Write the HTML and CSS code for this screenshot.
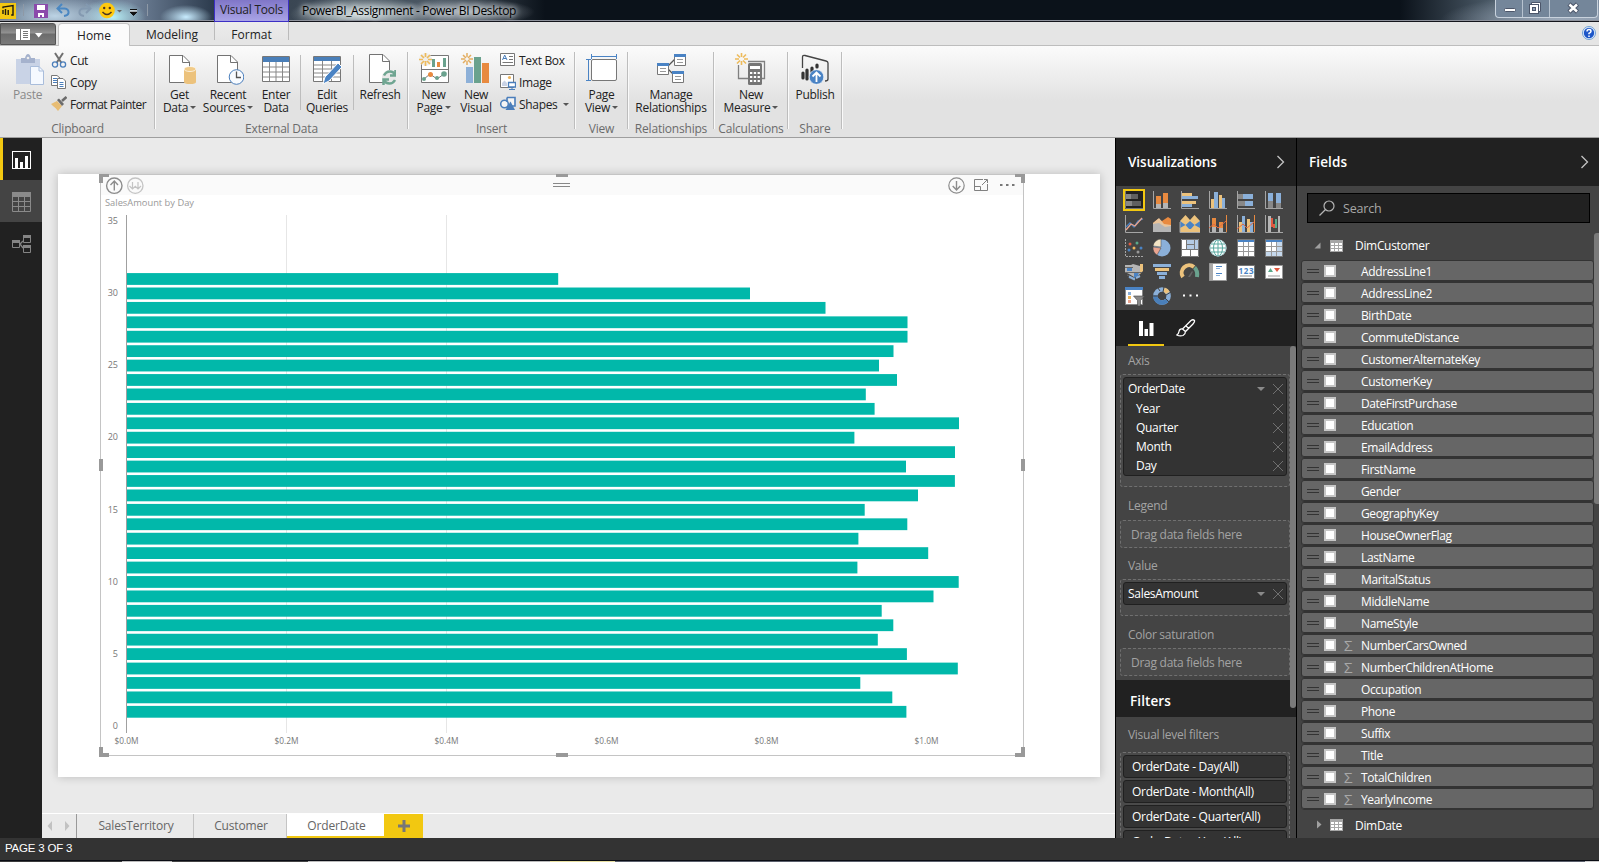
FILE: index.html
```html
<!DOCTYPE html>
<html lang="en">
<head>
<meta charset="utf-8">
<title>PowerBI_Assignment - Power BI Desktop</title>
<link rel="stylesheet" href="styles.css">
</head>
<body>
<div class="app">
  <header class="titlebar">
    <div class="quick">
      <svg width="152" height="21" viewBox="0 0 152 21">
        <rect x="0" y="3" width="16" height="16" fill="#f2c811"/>
        <path d="M3 14V10M5.5 15V9M8.2 15V10M3 8.2V7L13 5.5V15H11.2" fill="none" stroke="#1c1a10" stroke-width="1.4"/>
        <path d="M23.5 4V16M147.5 4V16" stroke="#8e99a6"/>
        <path d="M34 4H48V18H34Z" fill="#8b4bab"/><path d="M37 5H45V10H37Z" fill="#fff"/><path d="M38 13H44V17H42V15H40V17H38Z" fill="#fff"/>
        <path d="M62 4L57.500 8.500L62 13M58 8.500H64.500Q69 9 68.500 13Q68 15.500 64 16" fill="none" stroke="#4a87c2" stroke-width="2"/>
        <path d="M86 4L90.500 8.500L86 13M90 8.500H83.500Q79 9 79.500 13Q80 15.500 84 16" fill="none" stroke="#8399b0" stroke-width="2"/>
        <circle cx="107" cy="10.500" r="7.800" fill="#ffc90e"/><circle cx="104.200" cy="8" r="1.200" fill="#4a3420"/><circle cx="109.800" cy="8" r="1.200" fill="#4a3420"/><path d="M102.500 12Q107 17 111.500 12" fill="none" stroke="#4a3420" stroke-width="1.400"/>
        <path d="M117 10H122L119.500 12.500Z" fill="#666"/>
        <path d="M130 9.500H137M130 12H137L133.500 15.500Z" fill="#111" stroke="#111"/><path d="M130 11H137" stroke="#fff"/>
      </svg>
    </div>
    <div class="visual-tools">Visual Tools</div>
    <div class="window-title">PowerBI_Assignment - Power BI Desktop</div>
    <div class="window-buttons">
      <span class="wb"><svg width="28" height="17"><rect x="8.500" y="8.500" width="11" height="3" rx="1" fill="#fff" stroke="#4c566a"/></svg></span>
      <span class="wb"><svg width="26" height="17"><path d="M8.500 2.500H17.500V11.500H8.500Z" fill="#fff" stroke="#4c566a"/><rect x="6.500" y="4.500" width="9" height="9" fill="#fff" stroke="#4c566a"/><rect x="9.500" y="7.500" width="3" height="3" fill="#8fa0b5" stroke="#4c566a"/></svg></span>
      <span class="wb wide"><svg width="46" height="17"><path d="M19 4L27.500 12M27.500 4L19 12" stroke="#4c566a" stroke-width="4.500"/><path d="M19.500 4.500L27 11.500M27 4.500L19.500 11.500" stroke="#fff" stroke-width="2.500"/></svg></span>
    </div>
  </header>

  <nav class="tabs">
    <div class="file-tab"><svg width="56" height="22"><path d="M15 5H29V16H15Z" fill="#fff"/><path d="M19.500 5V16" stroke="#777"/><path d="M22 7.500H27M22 9.500H27M22 11.500H27M22 13.500H27" stroke="#777"/><path d="M34 9H41.500L37.700 13.500Z" fill="#fff"/></svg></div>
    <div class="tab home">Home</div>
    <div class="tab modeling">Modeling</div>
    <div class="tab format">Format</div>
    <svg class="help" width="14" height="14" viewBox="0 0 14 14"><circle cx="7" cy="7" r="6.500" fill="#e8f1fb" stroke="#6f9fd4"/><circle cx="7" cy="7" r="5.200" fill="#1d56c8"/><path d="M5 5.500Q5 3.500 7 3.500Q9 3.500 9 5.200Q9 6.200 7 7.300V8.300M7 9.500V11" fill="none" stroke="#fff" stroke-width="1.500"/></svg>
  </nav>

  <section class="ribbon">
    <div class="group g-clip">
      <div class="items">
        <div class="big w54 disabled">
          <svg width="32" height="34" viewBox="0 0 32 34"><rect x="4" y="6" width="24" height="25" fill="#c9d3e6"/><path d="M9 10V5H13Q14 1 16 1Q18 1 19 5H23V10Z" fill="#a5b2cd"/><circle cx="16" cy="5" r="1.300" fill="#eee"/><path d="M18.500 13.500H27L31.500 18V31.500H18.500Z" fill="#f5f9ff" stroke="#a9bddb"/><path d="M27 13.500V18H31.500" fill="none" stroke="#a9bddb"/></svg>
          <span>Paste</span>
        </div>
        <div class="smalls clip">
          <div class="small"><svg width="16" height="16" viewBox="0 0 16 16"><path d="M4 1L10.500 11M12 1L5.500 11" stroke="#707070" stroke-width="2"/><circle cx="4" cy="12.500" r="2.600" fill="none" stroke="#4a7ebb" stroke-width="1.300"/><circle cx="12" cy="12.500" r="2.600" fill="none" stroke="#4a7ebb" stroke-width="1.300"/></svg>Cut</div>
          <div class="small"><svg width="16" height="16" viewBox="0 0 16 16"><path d="M.5 1.500H6L9 4V11.500H.500Z" fill="#fff" stroke="#777"/><path d="M2 4.500H6M2 6.500H6M2 8.500H6" stroke="#4a7ebb"/><path d="M6.500 4.500H12L14.500 7V14.500H6.500Z" fill="#fff" stroke="#777"/><path d="M8.500 8.500H12.500M8.500 10.500H12.500M8.500 12.500H12.500" stroke="#4a7ebb"/></svg>Copy</div>
          <div class="small fp"><svg width="16" height="16" viewBox="0 0 16 16"><path d="M0 8L6 5L11 10L7 15Q5 12 2 10Z" fill="#e8bd74"/><path d="M6 4L8 2.500L13 8L11 10Z" fill="#6b6b6b"/><path d="M11 5L15.500 1" stroke="#6b6b6b" stroke-width="2.600"/></svg>Format Painter</div>
        </div>
      </div>
      <div class="glabel">Clipboard</div>
    </div>

    <div class="group g-ext">
      <div class="items">
        <div class="big w49"><svg width="32" height="34" viewBox="0 0 32 34"><path d="M5.500 2.500H19L25.500 9V29.500H5.500Z" fill="#fff" stroke="#737373"/><path d="M18.500 2.500V9.500H25.500" fill="none" stroke="#737373"/><path d="M20 16V29Q20 31 26 31Q32 31 32 29V16Z" fill="#ecc27c"/><ellipse cx="26" cy="16" rx="6" ry="2.500" fill="#f1cb89" stroke="#fff" stroke-width=".7"/></svg><span>Get<br>Data<i class="caret"></i></span></div>
        <div class="big w48"><svg width="32" height="34" viewBox="0 0 32 34"><path d="M5.500 2.500H19L25.500 9V29.500H5.500Z" fill="#fff" stroke="#737373"/><path d="M18.500 2.500V9.500H25.500" fill="none" stroke="#737373"/><circle cx="24.500" cy="24" r="7.300" fill="#f8fbff" stroke="#4a7ebb"/><path d="M24.500 18.500V24.500H29" fill="none" stroke="#555" stroke-width="1.300"/></svg><span>Recent<br>Sources<i class="caret"></i></span></div>
        <div class="big w47"><svg width="32" height="34" viewBox="0 0 32 34"><path d="M2.500 3.500H29.500V28.500H2.500Z" fill="#fff" stroke="#777"/><path d="M3 4H29V9H3Z" fill="#4a7fb9"/><path d="M3 14H29M3 19H29M3 24H29M9.500 9V28M16 9V28M22.500 9V28" stroke="#888"/></svg><span>Enter<br>Data</span></div>
        <i class="isep"></i>
        <div class="big w53"><svg width="32" height="34" viewBox="0 0 32 34"><path d="M2.500 3.500H29.500V28.500H2.500Z" fill="#fff" stroke="#777"/><path d="M3 4H29V8H3Z" fill="#4a7fb9"/><path d="M3 12H29M3 16H29M3 20H29M3 24H29M11.500 8V28M20.500 8V28" stroke="#888"/><path d="M12 31L14 24L27 10L31 14L18 28Z" fill="#4a83c4" stroke="#fff"/></svg><span>Edit<br>Queries</span></div>
        <i class="isep"></i>
        <div class="big w52"><svg width="32" height="34" viewBox="0 0 32 34"><path d="M5.500 1.500H19L25.500 8V29.500H5.500Z" fill="#fff" stroke="#737373"/><path d="M18.500 1.500V8.500H25.500" fill="none" stroke="#737373"/><circle cx="25.500" cy="24.500" r="7.500" fill="#e8e8e8"/><path d="M20 22.500Q22 18.500 26 18.500Q29 18.500 31 21.500M31.500 17V22.500H26M31 27Q29 30.500 25.500 30.500Q22 30.500 20 27.500M19.500 32V26.500H25" fill="none" stroke="#6fa591" stroke-width="2.500"/></svg><span>Refresh</span></div>
      </div>
      <div class="glabel">External Data</div>
    </div>

    <div class="group g-ins">
      <div class="items">
        <div class="big w50"><svg width="32" height="34" viewBox="0 0 32 34"><path d="M3.500 2.500H30.500V29.500H3.500Z" fill="#fff" stroke="#777"/><path d="M3 16.500H31" stroke="#777"/><path d="M14 6H17V14H14ZM25 5H28V14H25Z" fill="#6aa28e"/><path d="M19 9H22V14H19Z" fill="#e88a40"/><path d="M6 26L12 21L19 26L26 21" fill="none" stroke="#777"/><circle cx="6" cy="26" r="2" fill="#6aa28e"/><circle cx="12.500" cy="21.500" r="2.500" fill="#e88a40"/><circle cx="19" cy="25" r="2" fill="#6aa28e"/><circle cx="26" cy="21" r="2.800" fill="#6aa28e"/><circle cx="7.500" cy="6.500" r="6.500" fill="#eee"/><path d="M7.500 0V4M7.500 8V13M1 6.500H5M10 6.500H14M3 2L6 5M9 8L12 11M12 2L9 5M6 8L3 11" stroke="#edbb5c" stroke-width="1.700"/></svg><span>New<br>Page<i class="caret"></i></span></div>
        <div class="big w35"><svg width="32" height="34" viewBox="0 0 32 34"><rect x="6" y="14" width="7" height="16" fill="#8db0d8"/><rect x="14" y="4" width="7" height="26" fill="#6aa28e"/><rect x="22" y="10" width="7" height="20" fill="#e88a40"/><path d="M7 0V4M7 8V12M1 6H5M9 6H13M3 2L6 5M8 7L11 10M11 2L8 5M6 7L3 10" stroke="#e3ae62" stroke-width="1.500"/></svg><span>New<br>Visual</span></div>
        <div class="smalls ins">
          <div class="small"><svg width="16" height="16" viewBox="0 0 16 16"><path d="M.5 1.500H14.500V13.500H.500Z" fill="#fff" stroke="#777"/><path d="M2.500 8L4.700 3L7 8M3.200 6.500H6.300" fill="none" stroke="#4a7ebb"/><path d="M9 4.500H13M9 7.500H13M2.500 10.500H13" stroke="#777"/></svg>Text Box</div>
          <div class="small"><svg width="16" height="16" viewBox="0 0 16 16"><path d="M.5 .5H13.500V13.500H.500Z" fill="#fff" stroke="#777"/><circle cx="9.500" cy="3.500" r="1.600" fill="#edb55c"/><path d="M2 12V9L4.500 6.500L7 9V12Z" fill="#c9d3e6"/><path d="M8.500 8.500H15.500V13H8.500Z" fill="#fff" stroke="#4a7ebb" stroke-width="1.300"/><path d="M9 15.500H15M12 13V15" stroke="#4a7ebb"/></svg>Image</div>
          <div class="small"><svg width="16" height="16" viewBox="0 0 16 16"><circle cx="4.500" cy="8" r="3.800" fill="#f4f4f4" stroke="#4a7ebb" stroke-width="1.500"/><path d="M7 1.500H15V10H12" fill="#f4f4f4" stroke="#4a7ebb" stroke-width="1.600"/><path d="M7 1.500V6" stroke="#4a7ebb" stroke-width="1.600"/><path d="M5.500 14H15L10.500 5.500Z" fill="#4a7ebb"/></svg>Shapes<i class="caret"></i></div>
        </div>
      </div>
      <div class="glabel">Insert</div>
    </div>

    <div class="group g-view">
      <div class="items"><div class="big"><svg width="32" height="34" viewBox="0 0 32 34"><path d="M5.500 3.500H30M5.500 1V6M30.500 1V6M2.500 7V28M0 6.500H5M0 27.500H5" stroke="#4a83c4"/><rect x="5.500" y="6.500" width="25" height="21" rx="1.500" fill="#fff" stroke="#777"/></svg><span>Page<br>View<i class="caret"></i></span></div></div>
      <div class="glabel">View</div>
    </div>
    <div class="group g-rel">
      <div class="items"><div class="big"><svg width="32" height="34" viewBox="0 0 32 34"><path d="M13 13L21 5M13 16L20 23" stroke="#555" stroke-width="1.300"/><path d="M2.500 11.500H13.500V21.500H2.500ZM19.500 2.500H30.500V12.500H19.500ZM17.500 19.500H28.500V29.500H17.500Z" fill="#fff" stroke="#777"/><path d="M2 10H14V13H2ZM19 1H31V4H19ZM17 18H29V21H17Z" fill="#4a83c4"/><path d="M5 15.500H11M5 18.500H11M22 6.500H28M22 9.500H28M20 23.500H26M20 26.500H26" stroke="#999"/></svg><span>Manage<br>Relationships</span></div></div>
      <div class="glabel">Relationships</div>
    </div>
    <div class="group g-calc">
      <div class="items"><div class="big"><svg width="32" height="34" viewBox="0 0 32 34"><path d="M3.500 12V25.500H13M13 8.500H29.500V25.500H27" fill="none" stroke="#808080" stroke-width="1.300"/><rect x="13" y="10" width="14" height="22" rx="1.500" fill="#757575"/><path d="M15 13H25V16H15Z" fill="#fff"/><path d="M15 20H25M15 24H25M15 28H25" stroke="#fff" stroke-width="2.200" stroke-dasharray="2.300 1.500"/><path d="M6.500 0V4M6.500 8V12M0 6H4M9 6H13M2 1.500L5 4.500M8 7.500L11 10.500M11 1.500L8 4.500M5 7.500L2 10.500" stroke="#edbb5c" stroke-width="1.600"/></svg><span>New<br>Measure<i class="caret"></i></span></div></div>
      <div class="glabel">Calculations</div>
    </div>
    <div class="group g-share">
      <div class="items"><div class="big"><svg width="32" height="34" viewBox="0 0 32 34"><path d="M3.500 15V4Q3.500 2 6 2.500L27 8Q29 8.500 29 10V26Q29 28 26 28" fill="none" stroke="#444" stroke-width="1.300"/><path d="M4 20V25M8 17V26M13 15V19M18 12V14" stroke="#333" stroke-width="3.200" stroke-linecap="round"/><circle cx="17.500" cy="24" r="7.300" fill="#4a83c4" stroke="#fff" stroke-width=".6"/><path d="M17.500 29V20M13.500 23.500L17.500 19.500L21.500 23.500" fill="none" stroke="#fff" stroke-width="1.800"/></svg><span>Publish</span></div></div>
      <div class="glabel">Share</div>
    </div>
  </section>

  <main class="workspace">
    <aside class="rail">
      <div class="rail-item active"><svg width="20" height="19" viewBox="0 0 20 19"><rect x=".5" y=".5" width="18" height="17" fill="none" stroke="#fff"/><path d="M3 7H6V17H3ZM8 11H11V17H8ZM13 5H16V17H13Z" fill="#fff"/></svg></div>
      <div class="rail-item hover"><svg width="20" height="20" viewBox="0 0 20 20"><path d="M0 0H19V5H0Z" fill="#8a8a8a"/><path d="M.5 4V19.500H18.500V4M0 9.500H19M0 14.500H19M6.500 5V19M12.500 5V19" fill="none" stroke="#8a8a8a"/></svg></div>
      <div class="rail-item third"><svg width="20" height="19" viewBox="0 0 20 19"><path d="M.5 5.500H7.500V12.500H.500ZM11.500 .5H18.500V7.500H11.500ZM11.500 10.500H18.500V17.500H11.500Z" fill="none" stroke="#858585"/><path d="M8 9L11 6M8 9L11 13" stroke="#858585" stroke-width="1.300"/><path d="M0 5H8V8H0ZM11 0H19V3H11ZM11 10H19V13H11Z" fill="#858585"/></svg></div>
    </aside>

    <section class="canvas">
      <div class="page">
        <div class="visual">
          <svg id="chart" width="930" height="588" viewBox="98 172 930 588">
            <rect x="101" y="175" width="922" height="20" fill="#fafafa"/>
            <path d="M100.500 174.500H1023.500V755.500H100.500Z" fill="none" stroke="#c4c4c4"/>
            <path d="M99 174H109V177H103V183H99ZM1015 174H1025V183H1021V177H1015ZM99 747H103V753H109V757H99ZM1021 747H1025V757H1015V753H1021ZM556 174H568V177H556ZM556 753H568V757H556ZM99 459H103V471H99ZM1021 459H1025V471H1021Z" fill="#999"/>
            <path d="M553 183.500H570M553 186.500H570" stroke="#888"/>
            <circle cx="114.300" cy="185.700" r="7.700" fill="none" stroke="#8c8c8c" stroke-width="1.400"/><path d="M114.300 190.500V181.500M110.500 185L114.300 181L118 185" fill="none" stroke="#8c8c8c" stroke-width="1.400"/>
            <circle cx="135.300" cy="185.700" r="7.700" fill="none" stroke="#c4c4c4" stroke-width="1.300"/><path d="M132.500 182V189M138 182V189M129.500 186L132.500 189L135.300 186.300L138 189L141 186" fill="none" stroke="#c4c4c4" stroke-width="1.200"/>
            <circle cx="956.500" cy="185.500" r="7.700" fill="none" stroke="#8c8c8c" stroke-width="1.200"/><path d="M956.500 181V190M952.700 186L956.500 190L960.300 186" fill="none" stroke="#8c8c8c" stroke-width="1.400"/>
            <path d="M983 179.500H974.500V190.500H987.500V184M974.500 186.500H980.500V190.500M982 185L987 180M984 179.500H987.500V183" fill="none" stroke="#808080"/>
            <path d="M1000 184H1002.500V186H1000ZM1006 184H1008.500V186H1006ZM1012 184H1014.500V186H1012Z" fill="#777"/>
            <path d="M286.500 215V733M446.500 215V733" stroke="#e6e6e6"/>
            <text x="105" y="206" class="ctitle" textLength="89" lengthAdjust="spacingAndGlyphs">SalesAmount by Day</text>
            <g id="bars" fill="#01b8aa"></g>
            <path d="M126.500 215V733" stroke="#a0a0a0"/>
            <g id="axes" class="ctick"></g>
          </svg>
        </div>
      </div>
      <div class="sheet-tabs">
        <div class="pager"><svg width="33" height="24"><path d="M10 7V17L5.500 12ZM23 7V17L27.500 12Z" fill="#c2c2c2"/></svg></div>
        <div class="sheet s1">SalesTerritory</div>
        <div class="sheet s2">Customer</div>
        <div class="sheet s3">OrderDate</div>
        <div class="add"><svg width="12" height="12"><path d="M6 0V12M0 6H12" stroke="#777" stroke-width="3"/></svg></div>
      </div>
    </section>

    <aside class="viz-pane">
      <div class="pane-head">Visualizations<svg width="9" height="14"><path d="M1.500 1L7.500 7L1.500 13" fill="none" stroke="#c4c4c4" stroke-width="1.300"/></svg></div>
      <div class="gallery">
        <div class="vi sel"><svg viewBox="0 0 18 18"><path d="M.5 0V17.500H18" stroke="#777" fill="none"/><path d="M1 3H6V8H1ZM1 10H7V15H1Z" fill="#888"/><path d="M6 3H13V8H6ZM7 10H16V15H7Z" fill="#606060"/></svg></div>
        <div class="vi"><svg viewBox="0 0 18 18"><path d="M.5 0V17.500H18" stroke="#a5a5a5" fill="none"/><path d="M3 5H8V13H3ZM10 2H15V12H10Z" fill="#e88a40"/><path d="M3 13H8V17H3ZM10 12H15V17H10Z" fill="#b5b5b5"/></svg></div>
        <div class="vi"><svg viewBox="0 0 18 18"><path d="M.5 0V17.500H18" stroke="#a5a5a5" fill="none"/><path d="M1 2H11V5H1ZM1 10H15V13H1Z" fill="#ecc27c"/><path d="M1 5H17V8H1ZM1 13H11V16H1Z" fill="#8bb0d9"/></svg></div>
        <div class="vi"><svg viewBox="0 0 18 18"><path d="M.5 0V17.500H18" stroke="#a5a5a5" fill="none"/><path d="M2 8H5V17H2ZM10 4H13V17H10Z" fill="#ecc27c"/><path d="M5 1H9V17H5ZM13 7H16V17H13Z" fill="#8bb0d9"/></svg></div>
        <div class="vi"><svg viewBox="0 0 18 18"><path d="M.5 0V17.500H18" stroke="#a5a5a5" fill="none"/><path d="M1 3H6V8H1ZM1 10H8V15H1Z" fill="#888"/><path d="M6 3H16V8H6ZM8 10H16V15H8Z" fill="#8bb0d9"/></svg></div>
        <div class="vi"><svg viewBox="0 0 18 18"><path d="M.5 0V17.500H18" stroke="#a5a5a5" fill="none"/><path d="M3 2H8V10H3ZM11 2H16V12H11Z" fill="#8bb0d9"/><path d="M3 10H8V17H3ZM11 12H16V17H11Z" fill="#888"/></svg></div>

        <div class="vi"><svg viewBox="0 0 18 18"><path d="M.5 0V17.500H18" stroke="#a5a5a5" fill="none"/><path d="M1 12L5 8L9 12L13 6L18 4" stroke="#4a83c4" fill="none" stroke-width="1.300"/><path d="M1 15L6 9L10 11L17 3" stroke="#e9a48f" fill="none" stroke-width="1.300"/></svg></div>
        <div class="vi"><svg viewBox="0 0 18 18"><path d="M0 8L5 4L9 6L15 2L18 4V16H0Z" fill="#e88a40"/><path d="M0 8L6 3L11 9L18 10V17H0Z" fill="#e9c49b"/><path d="M0 9L6 8L12 12L18 11V17H0Z" fill="#b5b5b5"/></svg></div>
        <div class="vi"><svg viewBox="0 0 18 18"><path d="M-1 6L4.500 0L9 5L13.500 0L19 6V18H-1Z" fill="#ecc27c"/><path d="M-1 6L4.500 10L9 6L13.500 10L19 6V14H-1Z" fill="#4a83c4"/><path d="M-1 13L4.500 10L9 15L13.500 10L19 13V18H-1Z" fill="#ecc27c"/><path d="M-1 7V17.500H19" fill="none" stroke="#a5a5a5"/></svg></div>
        <div class="vi"><svg viewBox="0 0 18 18"><path d="M.5 0V17.500H17.500" stroke="#a5a5a5" fill="none"/><path d="M17.500 0V17" stroke="#e88a40"/><path d="M3 3H7V12H3ZM10 7H14V13H10Z" fill="#e88a40"/><path d="M3 12H7V17H3ZM10 13H14V17H10Z" fill="#b5b5b5"/><path d="M0 13L5 9L9 13L17 6" stroke="#e16a45" fill="none"/></svg></div>
        <div class="vi"><svg viewBox="0 0 18 18"><path d="M.5 0V17.500H17.500" stroke="#a5a5a5" fill="none"/><path d="M17.500 0V17" stroke="#e88a40"/><path d="M2 7H5V17H2ZM10 4H13V17H10Z" fill="#ecc27c"/><path d="M5 1H8V17H5ZM13 7H16V17H13Z" fill="#8bb0d9"/><path d="M0 14L6 9L10 13L17 7" stroke="#e16a45" fill="none"/></svg></div>
        <div class="vi"><svg viewBox="0 0 18 18"><path d="M.5 0V17.500H18" stroke="#a5a5a5" fill="none"/><path d="M3 1H6V17H3ZM13 1H15V17H13Z" fill="#b5b5b5"/><path d="M6 3H8V12H6ZM8 9H10V13H8Z" fill="#e1593f"/><path d="M10 4H12V13H10Z" fill="#5aa98a"/></svg></div>

        <div class="vi"><svg viewBox="0 0 18 18"><path d="M.5 0V17.500H18" stroke="#a5a5a5" fill="none" stroke-dasharray="2 1"/><circle cx="12" cy="4" r="1.500" fill="#5aa98a"/><circle cx="5" cy="5" r="1.500" fill="#e1593f"/><circle cx="9" cy="9" r="1.500" fill="#edb55c"/><circle cx="4" cy="11" r="1.500" fill="#4a83c4"/><circle cx="16" cy="9" r="1.500" fill="#4a83c4"/><circle cx="13" cy="13" r="1.500" fill="#999"/></svg></div>
        <div class="vi"><svg viewBox="0 0 18 18"><circle cx="9" cy="9" r="8.500" fill="#8bb0d9"/><path d="M8 8V0A8.500 8.500 0 0 0 0 7Z" fill="#f3e4c5" stroke="#444" stroke-width=".5"/><path d="M8 9L0 8A9 9 0 0 0 4 16Z" fill="#e9a48f" stroke="#444" stroke-width=".5"/></svg></div>
        <div class="vi"><svg viewBox="0 0 18 18"><path d="M0 0H18V18H0Z" fill="#fff"/><path d="M5 0H18V10H5Z" fill="#b4cbe5"/><path d="M.5 .5H17.500V17.500H.500ZM5.500 0V10M0 10.500H18M13.500 0V10M5 5.500H14M9.500 11V18" fill="none" stroke="#777"/></svg></div>
        <div class="vi"><svg viewBox="0 0 18 18"><circle cx="9" cy="9" r="8.500" fill="#fff"/><path d="M9 1V17M1 9H17M2 5H16M2 13H16" stroke="#5aa9a0"/><ellipse cx="9" cy="9" rx="4.500" ry="8" fill="none" stroke="#5aa9a0"/><circle cx="9" cy="9" r="8" fill="none" stroke="#8bc0c4" stroke-width=".7"/></svg></div>
        <div class="vi"><svg viewBox="0 0 18 18"><path d="M.5 .5H17.500V17.500H.500Z" fill="#fff" stroke="#777"/><path d="M1 1H17V3H1Z" fill="#4a83c4"/><path d="M1 7.500H17M1 12.500H17M6.500 3V17M11.500 3V17" stroke="#999"/></svg></div>
        <div class="vi"><svg viewBox="0 0 18 18"><path d="M.5 .5H17.500V17.500H.500Z" fill="#fff" stroke="#777"/><path d="M1 13H17V17H1ZM12 3H17V17H12Z" fill="#c5d8ec"/><path d="M1 1H17V3H1Z" fill="#4a83c4"/><path d="M1 7.500H17M1 12.500H17M6.500 3V17M11.500 3V17" stroke="#999"/></svg></div>

        <div class="vi"><svg viewBox="0 0 18 18"><path d="M0 2H6L8 1L15 3L17 8L14 12L9 14L4 11L0 9Z" fill="#b5b5b5"/><path d="M15 1H18V8L15 11Z" fill="#ecc27c"/><path d="M2 5H7V8H2ZM9 10L14 9L13 13L9 15Z" fill="#4a83c4"/><path d="M4 15L9 17M2 12L6 14M0 9.500H17M0 4.500H8" stroke="#666"/><path d="M4 13.500L10 16.500M11 15L15 13" stroke="#8bb0d9" stroke-width="2"/></svg></div>
        <div class="vi"><svg viewBox="0 0 18 18"><path d="M0 1H18V4H0ZM4 9H14V12H4Z" fill="#8bb0d9"/><path d="M2 5H16V8H2Z" fill="#ecc27c"/><path d="M6 13H12V16H6Z" fill="#8bb0d9"/></svg></div>
        <div class="vi"><svg viewBox="0 0 18 18"><path d="M2 14A7.500 7.500 0 0 1 13 4" fill="none" stroke="#ecc27c" stroke-width="4"/><path d="M13.500 4.500Q17 8 16 14" fill="none" stroke="#6aa28e" stroke-width="4"/><path d="M7 14L11 8L12 9L9 14Z" fill="#666"/></svg></div>
        <div class="vi"><svg viewBox="0 0 18 18"><path d="M.5 .5H17.500V17.500H.500Z" fill="#fff" stroke="#999"/><path d="M1 1H4V17H1Z" fill="#aaa"/><path d="M7 3.500H13M7 10.500H13" stroke="#4a83c4" stroke-width="1.200"/><path d="M7 5.500H11M7 12.500H11" stroke="#8bb0d9"/></svg></div>
        <div class="vi"><svg viewBox="0 0 18 18"><path d="M.5 2.500H17.500V15.500H.500Z" fill="#fff" stroke="#777"/><text x="1.500" y="10.500" font-size="8" font-weight="700" fill="#4a83c4" textLength="15">123</text><path d="M3 13H15" stroke="#888"/></svg></div>
        <div class="vi"><svg viewBox="0 0 18 18"><path d="M.5 2.500H17.500V15.500H.500Z" fill="#fff" stroke="#999"/><path d="M3 9L5.500 5L8 9Z" fill="#5aa98a"/><path d="M9 5H15L12 9Z" fill="#e1593f"/><path d="M3 13H15" stroke="#999"/></svg></div>

        <div class="vi"><svg viewBox="0 0 18 18"><path d="M.5 .5H17.500V17.500H.500Z" fill="#fff" stroke="#888"/><path d="M0 0H18V3H0Z" fill="#4a83c4"/><path d="M3 5H6V8H3Z" fill="#8bb0d9"/><path d="M3 9H6V12H3Z" fill="#edb55c"/><path d="M3 13H6V16H3Z" fill="#e9a48f"/><path d="M8.500 9H19.500L15.500 13.500V19H12.500V13.500Z" fill="#888" stroke="#444" stroke-width=".6"/></svg></div>
        <div class="vi"><svg viewBox="0 0 18 18"><g fill="none" stroke-width="4.500"><circle cx="9" cy="9" r="6.600" stroke="#8bb0d9"/><circle cx="9" cy="9" r="6.600" stroke="#ecc27c" pathLength="100" stroke-dasharray="12 88" transform="rotate(-72 9 9)"/><circle cx="9" cy="9" r="6.600" stroke="#4a7fb9" pathLength="100" stroke-dasharray="42 58" transform="rotate(35 9 9)"/></g><path d="M11 0L10 5M18 5L13 8M0 9H5M5 1L7 4M16 15L12 11" stroke="#444"/></svg></div>
        <div class="vi"><svg viewBox="0 0 18 18"><path d="M2 7.500H4V9.500H2ZM8.500 7.500H10.500V9.500H8.500ZM15 7.500H17V9.500H15Z" fill="#fff"/></svg></div>
      </div>
      <div class="pane-tabs">
        <div class="ptab on"><svg width="15" height="16"><path d="M0 0H4V15H0ZM5.500 8H9V15H5.500ZM10.500 2H14.500V15H10.500Z" fill="#fff"/></svg></div>
        <div class="ptab"><svg width="20" height="18" viewBox="0 0 20 18"><path d="M6.500 10L15 1.500Q17 0 18.500 1.500Q19 3 17 5L9.500 12.500ZM6.500 10Q3.500 9.500 3 12.500Q2.700 15 .8 16Q4 17.500 7 16.500Q9.500 15 9.500 12.500M10 7L13 9.500" fill="none" stroke="#fff" stroke-width="1.300"/></svg></div>
      </div>
      <div class="wells">
        <div class="wlabel l1">Axis</div>
        <div class="well w1"><div class="chip tall">
          <div class="cr first"><span>OrderDate</span><i class="dd"></i><b class="x"></b></div>
          <div class="cr"><span>Year</span><b class="x"></b></div>
          <div class="cr"><span>Quarter</span><b class="x"></b></div>
          <div class="cr"><span>Month</span><b class="x"></b></div>
          <div class="cr"><span>Day</span><b class="x"></b></div>
        </div></div>
        <div class="wlabel l2">Legend</div>
        <div class="well drop">Drag data fields here</div>
        <div class="wlabel l3">Value</div>
        <div class="well w3"><div class="chip"><div class="cr only"><span>SalesAmount</span><i class="dd"></i><b class="x"></b></div></div></div>
        <div class="wlabel l4">Color saturation</div>
        <div class="well drop">Drag data fields here</div>
        <div class="filters-head">Filters</div>
        <div class="wlabel l5">Visual level filters</div>
        <div class="well w5">
          <div class="chip f">OrderDate - Day(All)</div>
          <div class="chip f">OrderDate - Month(All)</div>
          <div class="chip f">OrderDate - Quarter(All)</div>
          <div class="chip f">OrderDate - Year(All)</div>
        </div>
        <div class="scroll"></div>
      </div>
    </aside>

    <aside class="fields-pane">
      <div class="pane-head">Fields<svg width="9" height="14"><path d="M1.500 1L7.500 7L1.500 13" fill="none" stroke="#c4c4c4" stroke-width="1.300"/></svg></div>
      <div class="search"><svg width="17" height="17"><circle cx="10" cy="6" r="5" fill="none" stroke="#b5b5b5" stroke-width="1.200"/><path d="M6.500 9.500L.5 15.500" stroke="#b5b5b5" stroke-width="1.300"/></svg>Search</div>
      <div class="table-row"><svg width="34" height="14"><path d="M11.500 3.500V9.500H5.500Z" fill="#a0a0a0"/><path d="M21 1H34V13H21Z" fill="#a6a6a6"/><path d="M22 4H25V6H22ZM26 4H29V6H26ZM30 4H33V6H30ZM22 7H25V9H22ZM26 7H29V9H26ZM30 7H33V9H30ZM22 10H25V12H22ZM26 10H29V12H26ZM30 10H33V12H30Z" fill="#fff"/></svg><span>DimCustomer</span></div>
      <div id="fields" class="fields"></div>
      <div class="table-row last"><svg width="34" height="14"><path d="M8 2.500V10.500L12.500 6.500Z" fill="#a0a0a0"/><path d="M21 1H34V13H21Z" fill="#a6a6a6"/><path d="M22 4H25V6H22ZM26 4H29V6H26ZM30 4H33V6H30ZM22 7H25V9H22ZM26 7H29V9H26ZM30 7H33V9H30ZM22 10H25V12H22ZM26 10H29V12H26ZM30 10H33V12H30Z" fill="#fff"/></svg><span>DimDate</span></div>
      <div class="fscroll"></div>
    </aside>
  </main>
  <footer class="status">PAGE 3 OF 3</footer>
  <div class="taskbar"></div>
</div>
<script src="app.js"></script>
</body>
</html>
```
FILE: styles.css
```css
* { box-sizing: border-box; }
body { margin: 0; font: 12px/13px "Open Sans", "Noto Sans", sans-serif; color: #222; overflow: hidden; }
svg { display: block; flex: none; }
.app { width: 1599px; height: 862px; display: flex; flex-direction: column; background: #eaeaea; overflow: hidden; }

/* Title bar */
.titlebar { height: 22px; flex: none; display: flex; border-bottom: 1px solid #14151c; box-shadow: inset 0 -1px #8e929c;
  background:
    radial-gradient(ellipse 26px 12px at 186px 17px, #c8ecff, transparent),
    radial-gradient(ellipse 60px 20px at 55px 16px, #bcd3e4, transparent),
    radial-gradient(ellipse 34px 18px at 112px 17px, #b9f1f8, transparent),
    radial-gradient(ellipse 70px 18px at 360px 14px, #d6e2e2, transparent),
    radial-gradient(ellipse 70px 14px at 465px 12px, #a6adb5, transparent),
    radial-gradient(ellipse 120px 26px at 1560px 21px, #9eabbb, transparent),
    linear-gradient(90deg, #66788c 0, #71839a 130px, #2b3a4c 215px, #3a4653 290px, #4b5864 440px, #0b121a 545px, #0b121a 1400px, #51616f 1500px, #74859a 1599px); }
.quick { width: 214px; }
.visual-tools { width: 75px; height: 22px; border: 1px solid #3c2fc4; border-top: 0; background: linear-gradient(#8076c8, #a9a4e6); text-align: center; line-height: 19px; color: #222; letter-spacing: -.25px; white-space: nowrap; }
.window-title { width: 240px; padding-left: 13px; line-height: 22px; color: #000; white-space: nowrap; letter-spacing: -.33px; text-shadow: 0 0 5px #dde3e6, 0 0 7px #dde3e6; }
.window-buttons { margin-left: auto; margin-right: 1px; height: 18px; display: flex; border: 1px solid #c8d2dd; border-top: 0; border-radius: 0 0 4px 4px; background: #74869a; }
.wb { width: 27px; border-right: 1px solid #b7c3d0; overflow: hidden; }
.wb.wide { width: 47px; border: 0; }

/* Ribbon tabs */
.tabs { height: 24px; flex: none; display: flex; align-items: flex-end; background: #e5e5e5; border-bottom: 1px solid #bdbdbd; }
.file-tab { width: 56px; height: 22px; border: 1px solid #555; border-radius: 0 3px 0 0; background: linear-gradient(#666, #929292 45%, #6c6c6c 50%, #7a7a7a); }
.tab { height: 23px; line-height: 25px; text-align: center; }
.home { width: 72px; margin: 0 0 -1px 2px; background: #fbfbfb; border: 1px solid #c4c4c4; border-bottom: 0; border-radius: 4px 4px 0 0; line-height: 23px; }
.modeling { width: 84px; }
.format { width: 75px; border: solid #bbb; border-width: 0 1px; background: linear-gradient(#ececec, #e5e5e5); height: 18px; line-height: 25px; margin-bottom: 5px; }
.help { margin: 0 3px 5px auto; }

/* Ribbon */
.ribbon { height: 92px; flex: none; display: flex; background: linear-gradient(#fbfbfb, #e2e2e2 60%, #e2e2e2); border-bottom: 1px solid #9e9e9e; }
.group { position: relative; height: 91px; display: flex; flex-direction: column; }
.group::after { content: ""; position: absolute; right: 0; top: 6px; bottom: 8px; width: 1px; background: #bdbdbd; box-shadow: 1px 0 #fafafa; }
.items { height: 76px; display: flex; padding-top: 7px; }
.glabel { text-align: center; color: #6b6b6b; letter-spacing: -.2px; white-space: nowrap; }
.big { flex: 1; min-width: 0; display: flex; flex-direction: column; align-items: center; text-align: center; white-space: nowrap; letter-spacing: -.28px; }
.big span { margin-top: 1px; }
.disabled span { color: #8a8a8a; }
.caret { display: inline-block; border: 3px solid transparent; border-top-color: #555; border-bottom: 0; margin: 0 0 3px 2px; }
.w54 { flex: 0 0 55px; } .w48 { flex: 0 0 48px; } .w47 { flex: 0 0 48px; } .w52 { flex: 0 0 52px; } .w53 { flex: 0 0 52px; } .w49 { flex: 0 0 49px; } .w50 { flex: 0 0 51px; } .w35 { flex: 0 0 34px; }
.isep { width: 1px; height: 55px; margin-top: 2px; background: #bdbdbd; flex: none; }
.smalls { display: flex; flex-direction: column; margin-top: -4px; }
.clip { margin-left: -4px; }
.small { height: 22px; display: flex; align-items: center; gap: 3px; white-space: nowrap; letter-spacing: -.4px; }
.fp { letter-spacing: -.55px; }
.small .caret { margin: 0 0 0 2px; }
.ins { margin-left: 7px; }
.ins .small { letter-spacing: -.32px; }
.g-clip { width: 155px; } .g-ext { width: 253px; } .g-ins { width: 167px; } .g-view { width: 53px; }
.g-rel { width: 86px; } .g-calc { width: 74px; } .g-share { width: 54px; }

/* Workspace */
.workspace { height: 700px; flex: none; display: flex; }
.rail { width: 42px; background: #212121; }
.rail-item { height: 42px; padding: 12px 0 0 12px; }
.rail-item.active { border-left: 3px solid #f2c811; padding: 13px 0 0 9px; }
.rail-item.hover { background: #444; }
.rail-item.third { padding-top: 13px; }
.canvas { width: 1073px; background: #eaeaea; display: flex; flex-direction: column; justify-content: space-between; }
.page { width: 1042px; height: 603px; margin: 36px 0 0 16px; background: #fff; box-shadow: 0 0 9px rgba(0,0,0,.2); }
.visual { margin: -2px 0 0 40px; }
.ctitle { font-size: 9.6px; fill: #999; }
.ctick { font-size: 9px; fill: #777; }
.sheet-tabs { height: 25px; border-top: 1px solid #fff; display: flex; font-size: 12px; line-height: 24px; color: #666; }
.pager { width: 35px; border-right: 1px solid #999; }
.sheet { text-align: center; border-right: 1px solid #c4c4c4; letter-spacing: -.15px; padding-left: 2px; }
.s1 { width: 117px; } .s2 { width: 93px; }
.s3 { width: 97px; background: #fff; border: 0; border-bottom: 2px solid #f2c811; }
.add { width: 39px; background: #f2c811; display: flex; align-items: center; justify-content: center; }

/* Panes */
.viz-pane { width: 182px; border: solid #000; border-width: 0 1px; background: #444; display: flex; flex-direction: column; overflow: hidden; }
.pane-head { height: 48px; flex: none; background: #212121; color: #fff; font: 600 13.500px/48px "Open Sans", sans-serif; padding: 0 11px 0 12px; display: flex; justify-content: space-between; align-items: center; letter-spacing: -.04px; }
.fields-pane .pane-head { padding-right: 10px; letter-spacing: .1px; }
.gallery { height: 124px; flex: none; display: grid; grid-template-columns: repeat(6, 28px); grid-auto-rows: 24px; padding: 2px 0 0 4px; }
.vi { display: flex; align-items: center; justify-content: center; }
.vi svg { width: 18px; height: 18px; overflow: visible; }
.vi.sel svg { outline: 2px solid #f2c811; background: #212121; box-shadow: 0 0 0 1px #fff8c8; outline-offset: 0; }
.pane-tabs { height: 36px; flex: none; background: #212121; display: flex; padding-left: 12px; }
.ptab { width: 36px; display: flex; align-items: center; justify-content: center; margin-right: 4px; }
.ptab.on { border-bottom: 2px solid #f2c811; padding-top: 4px; }
.wells { position: relative; flex: 1; overflow: hidden; color: #a3a3a3; }
.wlabel { padding-left: 12px; height: 13px; white-space: nowrap; letter-spacing: -.28px; }
.l1 { margin: 8px 0 7px; } .l2 { margin: 12px 0 8px; } .l3 { margin: 11px 0 7px; } .l4 { margin: 12px 0 7px; } .l5 { margin: 11px 0 11px; }
.well { margin-left: 4px; width: 170px; border: 1px dashed #707070; border-radius: 3px; background: #4a4a4a; padding: 2px; }
.w1 { height: 113px; } .w3 { height: 37px; } .w5 { height: 130px; }
.drop { height: 28px; padding: 0 10px; line-height: 27px; letter-spacing: -.27px; }
.chip { background: #333; border: 1px solid #202020; border-radius: 3px; color: #fff; padding: 0 3px 0 4px; height: 23px; }
.chip.tall { height: 99px; }
.chip.f { padding-left: 8px; line-height: 22px; margin-bottom: 2px; white-space: nowrap; letter-spacing: -.26px; }
.cr { height: 19px; display: flex; align-items: center; padding-left: 8px; letter-spacing: -.3px; }
.cr.first, .cr.only { padding-left: 0; height: 21px; }
.cr span { flex: 1; }
.dd { border: 4px solid transparent; border-top-color: #8a8a8a; border-bottom: 0; margin-right: 8px; }
.x { width: 10px; height: 10px; background: linear-gradient(45deg, transparent 46%, #707070 46%, #707070 54%, transparent 54%), linear-gradient(-45deg, transparent 46%, #707070 46%, #707070 54%, transparent 54%); }
.filters-head { margin-top: 4px; height: 37px; background: #212121; color: #fff; font: 600 13.500px/42px "Open Sans", sans-serif; padding-left: 14px; letter-spacing: .1px; }
.scroll { position: absolute; right: 0; top: 0; width: 6px; height: 362px; background: #7a7a7a; border-radius: 3px; }

.fields-pane { position: relative; width: 302px; background: #444; }
.search { margin: 7px 9px 0 10px; height: 30px; background: #212121; border: 1px solid #000; color: #a8a8a8; display: flex; align-items: center; padding-left: 11px; gap: 7px; font-size: 12.500px; letter-spacing: -.2px; }
.table-row { height: 37px; padding: 8px 0 0 12px; display: flex; align-items: center; gap: 12px; color: #fff; letter-spacing: -.32px; }
.last { height: 30px; padding-top: 0; }
.fields { display: flex; flex-direction: column; margin-left: 4px; width: 293px; }
.field { height: 22px; border: 1px solid #333; border-radius: 3px; background: #666; display: flex; align-items: center; color: #fff; padding-left: 5px; letter-spacing: -.38px; box-shadow: inset 0 -1px #333; }
.grip { width: 12px; height: 4px; border: solid #333; border-width: 1px 0; margin-right: 5px; }
.cb { width: 12px; height: 12px; background: #fff; border: 2px solid #c6c6c6; margin-right: 8px; }
.sig { width: 17px; font-size: 15px; color: #a8a8a8; }
.fscroll { position: absolute; right: 0; top: 95px; width: 5px; height: 271px; background: #7a7a7a; border-radius: 3px 0 0 3px; }

.status { height: 22px; flex: none; background: #333; color: #fff; font: 11.500px/20px "Liberation Sans", Arial, sans-serif; padding-left: 5px; letter-spacing: -.2px; }
.taskbar { height: 2px; border-top: 1px solid #0a0c14; background: linear-gradient(90deg, #3b3b3b 0 122px, #bbb 122px 172px, #444 172px 308px, #bbb 308px 550px, #e8dfa0 550px 615px, #5a5f6b 615px 1585px, #ccc 1585px); }
```
FILE: app.js
```js
const NS = 'http://www.w3.org/2000/svg';
const add = (parent, tag, attrs, text) => {
  const el = document.createElementNS(NS, tag);
  for (const k in attrs) el.setAttribute(k, attrs[k]);
  if (text) el.textContent = text;
  parent.appendChild(el);
};

// Right edge of each day's bar, day 1 to day 31.
const ends = [906.4, 892.3, 860.3, 957.8, 906.9, 877.8, 893.3, 881.7, 933.5, 958.7,
  857.4, 928.2, 858.4, 907.3, 864.7, 918, 954.9, 906, 955, 854.4, 959, 874.6, 865.8,
  897, 879, 893.5, 907.5, 907.5, 825.5, 750, 558.2];
const bars = document.getElementById('bars');
ends.forEach((e, i) => add(bars, 'rect', { x: 126, y: 705.9 - i * 14.427, width: e - 126, height: 11.8 }));

const axes = document.getElementById('axes');
for (let v = 0; v <= 35; v += 5) add(axes, 'text', { x: 118, y: 729 - v * 14.427, 'text-anchor': 'end' }, String(v));
for (let k = 0; k < 6; k++) add(axes, 'text', { x: 126.500 + 160 * k, y: 744, 'text-anchor': 'middle', textLength: 24, lengthAdjust: 'spacingAndGlyphs' }, '$' + (k * 0.2).toFixed(1) + 'M');

const names = ['AddressLine1', 'AddressLine2', 'BirthDate', 'CommuteDistance', 'CustomerAlternateKey',
  'CustomerKey', 'DateFirstPurchase', 'Education', 'EmailAddress', 'FirstName', 'Gender', 'GeographyKey',
  'HouseOwnerFlag', 'LastName', 'MaritalStatus', 'MiddleName', 'NameStyle', 'NumberCarsOwned',
  'NumberChildrenAtHome', 'Occupation', 'Phone', 'Suffix', 'Title', 'TotalChildren', 'YearlyIncome'];
const numeric = new Set(['NumberCarsOwned', 'NumberChildrenAtHome', 'TotalChildren', 'YearlyIncome']);
document.getElementById('fields').innerHTML = names.map(n =>
  `<div class="field"><i class="grip"></i><i class="cb"></i><span class="sig">${numeric.has(n) ? 'Σ' : ''}</span><span>${n}</span></div>`).join('');
```
